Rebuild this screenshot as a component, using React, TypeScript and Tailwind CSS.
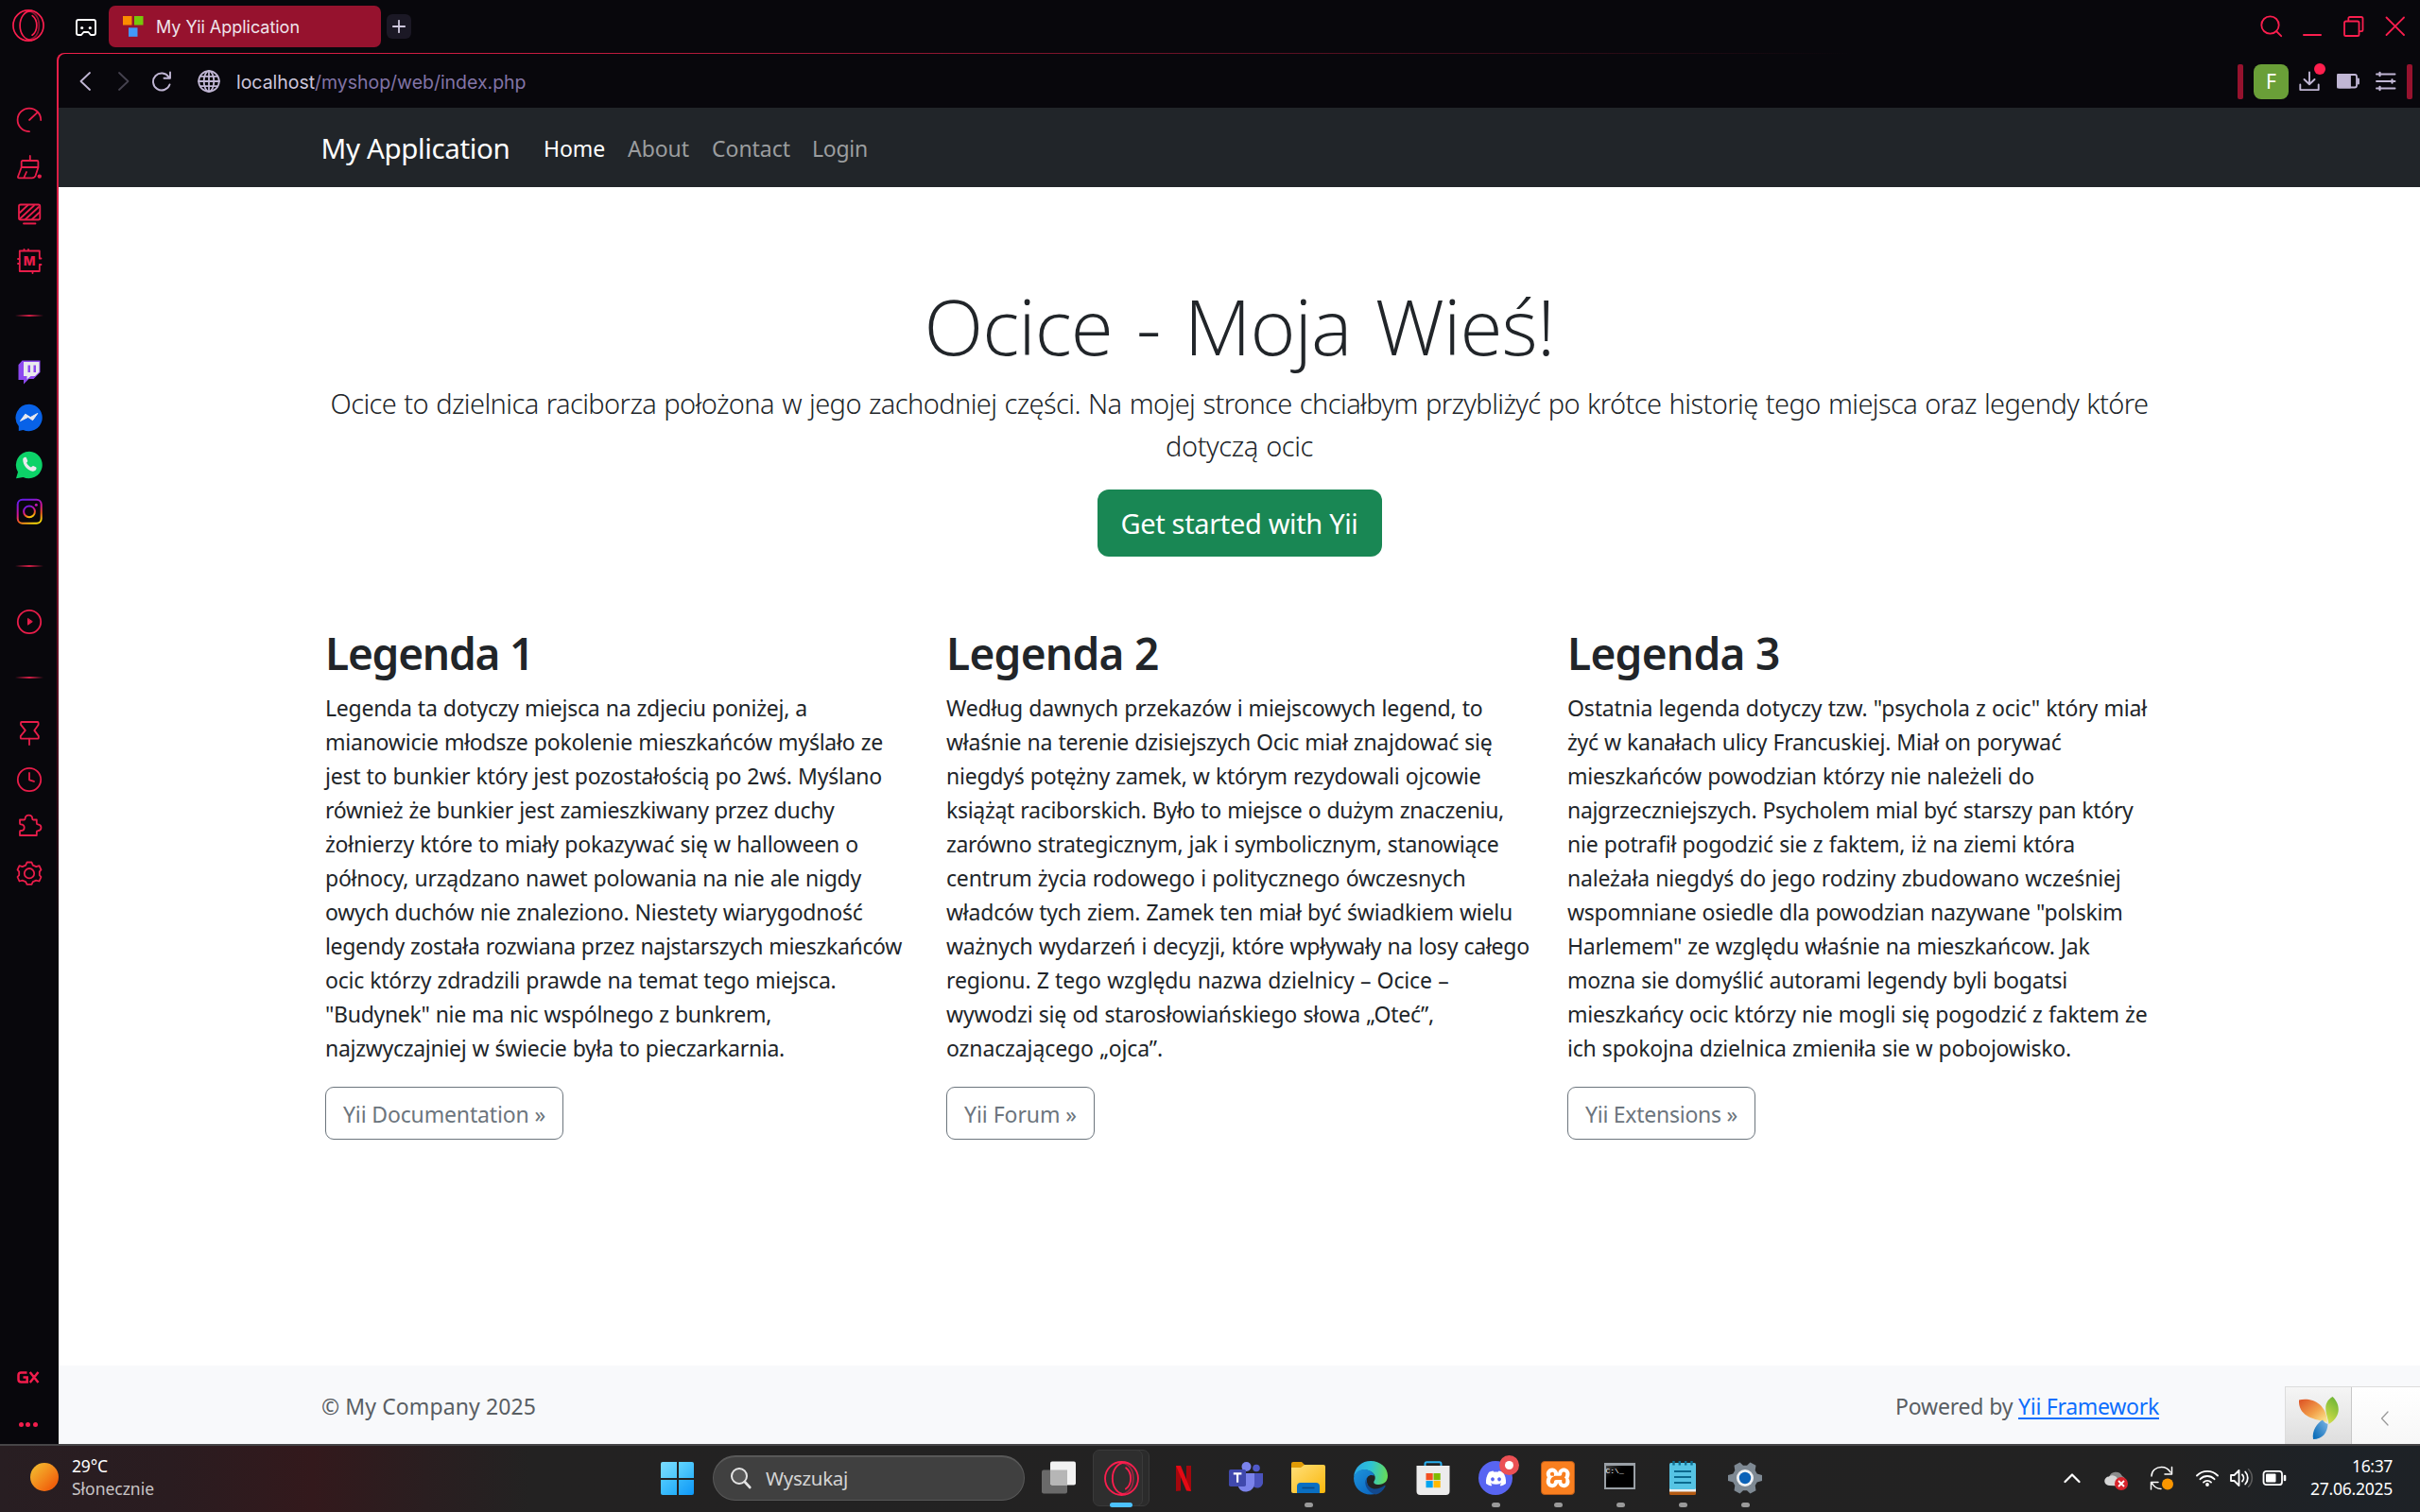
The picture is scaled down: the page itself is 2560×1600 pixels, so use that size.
import React, { useLayoutEffect, useRef, useState } from "react";
import { FaDiscord } from "react-icons/fa";
import { SiXampp } from "react-icons/si";

/* Text set to an exact measure by spreading the difference over its letters. */
function Fit({ w, children, className = "" }: { w: number; children: string; className?: string }) {
  const ref = useRef<HTMLSpanElement>(null);
  const [spacing, setSpacing] = useState(0);
  useLayoutEffect(() => {
    const el = ref.current;
    if (!el) return;
    el.style.letterSpacing = "0px";
    const natural = el.getBoundingClientRect().width;
    setSpacing((w - natural) / children.length);
    el.style.letterSpacing = (w - natural) / children.length + "px";
  }, [w, children]);
  return (
    <span ref={ref} className={"inline-block whitespace-pre " + className} style={{ letterSpacing: spacing + "px" }}>
      {children}
    </span>
  );
}

type Box = { children: React.ReactNode; className?: string; w?: number; h?: number; vb?: string };
function Svg({ children, className = "", w = 28, h = 28, vb }: Box) {
  return (
    <svg
      width={w}
      height={h}
      viewBox={vb ?? `0 0 ${w} ${h}`}
      fill="none"
      stroke="currentColor"
      strokeWidth={1.8}
      strokeLinecap="round"
      strokeLinejoin="round"
      className={"block shrink-0 " + className}
    >
      {children}
    </svg>
  );
}

function OperaLogo({ size }: { size: number }) {
  return (
    <Svg w={size} h={size} vb="0 0 36 36" className="text-[#fa1e4e]">
      <circle cx="18" cy="18" r="17" />
      <path d="M22 1.8C13 1.4 8.6 10 8.6 18S13 34.6 22 34.2" />
      <path d="M16 2.6C20 1 30 4 30 18S20 35 16 33.4" opacity="0.55" />
      <path d="M22.5 7C29 12 29 24 22.3 28.8" />
    </Svg>
  );
}

function TopBar() {
  return (
    <div className="flex h-[56px] items-start">
      <div className="mt-[10px] ml-[13px]">
        <OperaLogo size={34} />
      </div>
      <Svg w={24} h={20} className="mt-[19px] ml-[32px] text-white" vb="0 0 24 20">
        <path d="M4 2h16a2 2 0 0 1 2 2v12a2 2 0 0 1-2 2h-3l-2.5-3h-5L7 18H4a2 2 0 0 1-2-2V4a2 2 0 0 1 2-2Z" strokeWidth="1.9" />
        <circle cx="7.7" cy="10.5" r="1.6" fill="currentColor" stroke="none" />
        <circle cx="16.3" cy="10.5" r="1.6" fill="currentColor" stroke="none" />
      </Svg>
      <div className="mt-[6px] ml-[12px] flex h-[44px] w-[288px] items-center rounded-[7px] bg-[#96122e] pl-[15px]">
        <svg width="22" height="22" viewBox="0 0 22 22" className="block">
          <rect width="9.5" height="9.5" fill="#fb8c00" />
          <rect x="12" width="9.5" height="9.5" fill="#76c80a" />
          <rect x="6" y="12.3" width="9.5" height="9.5" fill="#4398fa" />
        </svg>
        <Fit w={152} className="mt-[2px] ml-[13px] font-['Inter'] text-[18px] leading-[24px] text-[#eee3ea]">
          My Yii Application
        </Fit>
      </div>
      <div className="mt-[15px] ml-[6px] flex h-[26px] w-[26px] items-center justify-center rounded-[6px] bg-[#1b1825]">
        <Svg w={14} h={14} className="text-[#cfc8de]">
          <path d="M7 .8v12.4M.8 7h12.4" />
        </Svg>
      </div>
      <div className="ml-auto flex items-start text-[#fa1e4e]">
        <Svg w={24} h={24} className="mt-[16px] mr-[21px]">
          <circle cx="10.5" cy="10.5" r="9.2" />
          <path d="m17 17 5.2 5.2" />
        </Svg>
        <div className="mt-[35.5px] mr-[22px] h-[2px] w-[20px] rounded bg-[#fa1e4e]" />
        <Svg w={24} h={24} className="mt-[16px] mr-[20px]">
          <rect x="2" y="6.5" width="15.5" height="15.5" rx="1.6" />
          <path d="M6.3 6V3.6c0-1 .6-1.6 1.6-1.6h12c1 0 1.6.6 1.6 1.6v12c0 1-.6 1.6-1.6 1.6h-2" />
        </Svg>
        <Svg w={24} h={24} className="mt-[16px] mr-[14px]">
          <path d="m2.5 2.5 18.500 18.500M21 2.500 2.500 21" />
        </Svg>
      </div>
    </div>
  );
}

function AddressBar() {
  return (
    <div className="flex h-[57px] items-center pt-px text-[#c0b6d4]">
      <Svg w={14} h={20} className="ml-[21px]">
        <path d="M12 1 2.500 10l9.500 9" />
      </Svg>
      <Svg w={14} h={20} className="ml-[27px] text-[#45424f]">
        <path d="m2 1 9.500 9L2 19" />
      </Svg>
      <Svg w={22} h={22} className="ml-[22px]" vb="0 0 22 22">
        <path d="M19.500 14.500A9 9 0 1 1 18.500 6.500M20 1.500v6.200h-6.500" strokeWidth="1.9" />
      </Svg>
      <Svg w={24} h={24} className="ml-[27px]">
        <circle cx="12" cy="12" r="10.800" />
        <ellipse cx="12" cy="12" rx="5.300" ry="10.800" />
        <path d="M12 1v22M1 12h22M3 6.800h18M3 17.200h18" />
      </Svg>
      <div className="mt-px ml-[17px] font-['Inter'] text-[19.500px] leading-[28px]">
        <Fit w={83} className="text-[#cdc6dc]">localhost</Fit>
        <Fit w={223.5} className="text-[#8274a6]">/myshop/web/index.php</Fit>
      </div>
      <div className="ml-auto flex items-center">
        <div className="h-[37px] w-[6px] rounded-[2px] bg-[#96122e]" />
        <div className="ml-[11px] flex h-[37px] w-[37px] items-center justify-center rounded-[8px] bg-[#6a9f38] pt-px font-['Noto_Sans'] text-[21px] leading-none text-white">
          F
        </div>
        <div className="relative ml-[11px]">
          <Svg w={22} h={22}>
            <path d="M11 1.500v12.500M5.500 9l5.500 5.300L16.500 9M1.300 14.500v5.600h19.400v-5.600" strokeWidth="1.900" />
          </Svg>
          <div className="absolute -top-[8px] left-[16px] h-[12px] w-[12px] rounded-full bg-[#ff1f4e]" />
        </div>
        <Svg w={24} h={16} className="ml-[18px]">
          <rect x="1" y="1" width="20" height="13.500" rx="2" />
          <path d="M1 1h13v13.500H1z" fill="currentColor" />
          <path d="M22.800 5.500v5" strokeWidth="2.200" />
        </Svg>
        <Svg w={22} h={22} className="ml-[17px]">
          <path d="M1 3.500h19.500M1 11h19.500M1 18.500h19.500" strokeWidth="1.900" />
          <path d="M4.500 1.800v3.400M17.500 9.300v3.400M4.500 16.800v3.400" strokeWidth="2.200" />
        </Svg>
        <div className="mr-[8px] ml-[11px] h-[37px] w-[6px] rounded-[2px] bg-[#96122e]" />
      </div>
    </div>
  );
}

function Divider({ className }: { className: string }) {
  return <div className={"h-[2px] w-[30px] bg-linear-to-r from-transparent via-[#d41e46] to-transparent " + className} />;
}

function Sidebar() {
  return (
    <aside className="flex w-[60px] shrink-0 flex-col items-center pl-[2px] text-[#e81d4a]">
      <Svg className="mt-[57px]">
        <path d="M14 26.200A12.300 12.300 0 1 1 26.200 14M14 14l9-8.300" />
      </Svg>
      <Svg className="mt-[22px]">
        <path d="M14.800 2v5M7 7h15.200a1.200 1.200 0 0 1 1.200 1.200V14H5.700V8.200A1.200 1.200 0 0 1 7 7ZM5.700 14 2 24c-.2.800.2 1.300 1 1.300h13.800c2 0 3-.7 3.700-2.300l3-9M8.500 24.500l2.500-5.500" />
        <circle cx="24.800" cy="23.600" r="2.200" fill="currentColor" stroke="none" />
      </Svg>
      <Svg className="mt-[22px]">
        <rect x="3" y="3.500" width="22.300" height="16" rx="1.800" />
        <path d="M4 12 12.500 4M4 18.500 19 4.500M10 19 24 6M17 19l8-7.500M8 23.500h12.500" />
      </Svg>
      <Svg className="mt-[21px]">
        <path d="M24.800 11V3.500h-21v21.500h21V19M24.800 11.500H26.500M24.800 18h1.700M2 12h2M2 17h2M8.500 1.800v1.700M13 1.800v1.700M17.500 25v2" />
        <text x="14" y="19" textAnchor="middle" fontSize="13.500" fontWeight="800" fill="currentColor" stroke="none" fontFamily="Inter">
          M
        </text>
      </Svg>
      <Divider className="mt-[43px]" />
      <svg width="28" height="28" viewBox="0 0 28 28" className="mt-[45px] block shrink-0">
        <path d="M6.500 1.500h19V14l-7 7h-5l-5.500 5.500V22H2.500V6z" fill="#8d48f0" />
        <path d="M8 3h16.500v10.500L20 18h-4.500L11.500 21.500V18H8z" fill="#e9e9ee" />
        <path d="M12.500 6.500h2.500v7.500h-2.500zM18.500 6.500h2.500v7.500h-2.500z" fill="#8d48f0" />
      </svg>
      <svg width="30" height="30" viewBox="0 0 30 30" className="mt-[19px] block shrink-0">
        <path d="M15 .7A14.300 14.300 0 1 1 8.500 28L3.800 29V24A14.300 14.300 0 0 1 15 .7Z" fill="#0862e8" />
        <path d="m5.500 18.500 5.300-7.300 5.400 3.400 7.600-4.200-5.200 7.300-4.900-3.300z" fill="#e9e9ee" stroke="#e9e9ee" strokeLinejoin="round" />
      </svg>
      <svg width="30" height="30" viewBox="0 0 30 30" className="mt-[20px] block shrink-0">
        <path d="M15 .7A14.300 14.300 0 1 1 8.500 28L1 29.200l2-6.800A14.300 14.300 0 0 1 15 .7Z" fill="#0cd268" />
        <path d="M8.200 9.300c0-1.500 1.300-2.500 2.500-2.500 1 0 1.300.5 1.700 1.600l.8 2c.3.900-.8 1.600-1.100 2.300 1 2.200 2.800 3.800 4.900 4.700.8-.3 1.300-1.600 2.200-1.400l2.700 1.300c.8.500.8 1.300.4 2.300-.6 1.500-2 2.200-3.700 2.100-5.600-.6-10.300-6.400-10.400-12.400Z" fill="#e9e9ee" />
      </svg>
      <svg width="28" height="28" viewBox="0 0 28 28" fill="none" className="mt-[20px] block shrink-0">
        <defs>
          <linearGradient id="insta" x1="0.300" y1="0" x2="0.700" y2="1">
            <stop offset="0" stopColor="#6a1be8" />
            <stop offset="0.450" stopColor="#d4149a" />
            <stop offset="0.720" stopColor="#f05a20" />
            <stop offset="1" stopColor="#f4d40a" />
          </linearGradient>
        </defs>
        <rect x="1.700" y="1.700" width="25" height="25" rx="5" stroke="url(#insta)" strokeWidth="2" />
        <circle cx="14" cy="14.300" r="5.900" stroke="url(#insta)" strokeWidth="2" />
        <circle cx="21.300" cy="7.300" r="1.500" fill="#c218b0" />
      </svg>
      <Divider className="mt-[43px]" />
      <Svg className="mt-[44px]">
        <circle cx="14" cy="14" r="12.200" />
        <path d="M12.500 10.800v6.400l4.500-3.200z" fill="currentColor" strokeWidth="1" />
      </Svg>
      <Divider className="mt-[44px]" />
      <Svg className="mt-[43px]">
        <path d="M14 20.500V27M5.800 3h17c.5 0 .8.400.8.900v2l-4.300 6 4.500 6v2c0 .500-.3.800-.8.800H5.600c-.500 0-.8-.3-.8-.8v-2l5-6-4.800-6V3.900c0-.5.300-.9.800-.9Z" />
      </Svg>
      <Svg className="mt-[22px]">
        <circle cx="14" cy="14" r="12.200" />
        <path d="M14 7v7.300l5 1.600" />
      </Svg>
      <Svg className="mt-[20px]">
        <path d="M4 8.500h4.600c.8 0 1-.5 1-1.200 0-2.300 1.500-3.700 3.800-3.700s3.800 1.400 3.800 3.700c0 .7.300 1.200 1 1.200h3.600v3.800c0 .7.500 1 1.200 1 2.100.2 3.500 1.400 3.500 3.400s-1.400 3.300-3.500 3.500c-.8 0-1.200.3-1.200 1V25H4v-4c0-.7.400-1 1-1 2 0 3.700-1.200 3.700-3.300S7 13.400 5 13.300c-.6 0-1-.4-1-1z" />
      </Svg>
      <Svg className="mt-[23px]">
        <path d="M11.500 2.500h5l1.300 3.200 3.500 1.400 3.200-1 2 4.300-1.700 2v3.800l1.700 1.800-2 4.500-3.300-.9-3.400 1.500-1.300 2.700h-5l-1.300-2.700-3.500-1.500-3.200.9-2-4.500 1.700-1.800v-3.800l-1.700-2 2-4.300 3.200 1 3.500-1.400z" />
        <circle cx="14" cy="14.200" r="5.200" />
      </Svg>
      <Svg w={24} h={13} vb="0 0 24 13" className="mt-auto mr-[3px] text-[#f21d4c]">
        <path d="M10.500 1.500H4.200Q1.500 1.500 1.500 4.200v4.600q0 2.700 2.700 2.700h6.500V6.500H6.500M13.700 1l8.800 11M22.500 1l-8.800 11" strokeWidth="2.500" strokeLinecap="butt" strokeLinejoin="miter" />
      </Svg>
      <div className="mt-[41px] mr-[3px] mb-[18px] flex gap-[2.500px]">
        <i className="h-[5px] w-[5px] rounded-full bg-[#f21d4c]" />
        <i className="h-[5px] w-[5px] rounded-full bg-[#f21d4c]" />
        <i className="h-[5px] w-[5px] rounded-full bg-[#f21d4c]" />
      </div>
    </aside>
  );
}

type Legend = { title: string; titleWidth: number; lines: [string, number][]; button: string; buttonText: number };

const legends: Legend[] = [
  {
    title: "Legenda 1",
    titleWidth: 220,
    lines: [
      ["Legenda ta dotyczy miejsca na zdjeciu poniżej, a", 510],
      ["mianowicie młodsze pokolenie mieszkańców myślało ze", 590],
      ["jest to bunkier który jest pozostałością po 2wś. Myślano", 589],
      ["również że bunkier jest zamieszkiwany przez duchy", 538.5],
      ["żołnierzy które to miały pokazywać się w halloween o", 564],
      ["północy, urządzano nawet polowania na nie ale nigdy", 567],
      ["owych duchów nie znaleziono. Niestety wiarygodność", 568.5],
      ["legendy została rozwiana przez najstarszych mieszkańców", 610],
      ["ocic którzy zdradzili prawde na temat tego miejsca.", 540.5],
      ["\"Budynek\" nie ma nic wspólnego z bunkrem,", 472],
      ["najzwyczajniej w świecie była to pieczarkarnia.", 486],
    ],
    button: "Yii Documentation »",
    buttonText: 214,
  },
  {
    title: "Legenda 2",
    titleWidth: 224.5,
    lines: [
      ["Według dawnych przekazów i miejscowych legend, to", 567.5],
      ["właśnie na terenie dzisiejszych Ocic miał znajdować się", 577.5],
      ["niegdyś potężny zamek, w którym rezydowali ojcowie", 565.5],
      ["książąt raciborskich. Było to miejsce o dużym znaczeniu,", 590],
      ["zarówno strategicznym, jak i symbolicznym, stanowiące", 584.5],
      ["centrum życia rodowego i politycznego ówczesnych", 549.5],
      ["władców tych ziem. Zamek ten miał być świadkiem wielu", 599],
      ["ważnych wydarzeń i decyzji, które wpływały na losy całego", 617],
      ["regionu. Z tego względu nazwa dzielnicy – Ocice –", 531.5],
      ["wywodzi się od starosłowiańskiego słowa „Oteć”,", 516],
      ["oznaczającego „ojca”.", 229],
    ],
    button: "Yii Forum »",
    buttonText: 119,
  },
  {
    title: "Legenda 3",
    titleWidth: 224.5,
    lines: [
      ["Ostatnia legenda dotyczy tzw. \"psychola z ocic\" który miał", 613],
      ["żyć w kanałach ulicy Francuskiej. Miał on porywać", 522.5],
      ["mieszkańców powodzian którzy nie należeli do", 494],
      ["najgrzeczniejszych. Psycholem mial być starszy pan który", 598.5],
      ["nie potrafił pogodzić sie z faktem, iż na ziemi która", 537],
      ["należała niegdyś do jego rodziny zbudowano wcześniej", 585.5],
      ["wspomniane osiedle dla powodzian nazywane \"polskim", 587.5],
      ["Harlemem\" ze względu właśnie na mieszkańcow. Jak", 552.5],
      ["mozna sie domyślić autorami legendy byli bogatsi", 529],
      ["mieszkańcy ocic którzy nie mogli się pogodzić z faktem że", 613.5],
      ["ich spokojna dzielnica zmieniła sie w pobojowisko.", 533],
    ],
    button: "Yii Extensions »",
    buttonText: 161,
  },
];

function LegendColumn({ item }: { item: Legend }) {
  return (
    <div className="flex flex-col items-start">
      <h2 className="text-[46px] leading-[58px] font-[560]">
        <Fit w={item.titleWidth}>{item.title}</Fit>
      </h2>
      <p className="mt-[11px] text-[23px] leading-[36px] font-[370] [word-spacing:0.5px]">
        {item.lines.map(([text, w]) => (
          <Fit key={text} w={w} className="!block w-fit">
            {text}
          </Fit>
        ))}
      </p>
      <a className="mt-[23px] flex h-[56px] items-center rounded-[9px] border border-[#6c757d] px-[18px] pt-[2px] text-[23px] leading-[36px] font-[370] text-[#6c757d]">
        <Fit w={item.buttonText}>{item.button}</Fit>
      </a>
    </div>
  );
}

function YiiLogo() {
  return (
    <svg width="42" height="45" viewBox="0 0 42 45" className="block">
      <defs>
        <linearGradient id="yo" x1="0" y1="0" x2="1" y2="1">
          <stop offset="0" stopColor="#dc4f23" />
          <stop offset="0.550" stopColor="#f2a04a" />
          <stop offset="1" stopColor="#fdf09a" />
        </linearGradient>
        <linearGradient id="yg" x1="0.600" y1="0" x2="0.200" y2="1">
          <stop offset="0" stopColor="#6fb536" />
          <stop offset="1" stopColor="#d8e04a" />
        </linearGradient>
        <linearGradient id="yb" x1="1" y1="0" x2="0" y2="0.800">
          <stop offset="0" stopColor="#7fb6e4" />
          <stop offset="1" stopColor="#0a6cb8" />
        </linearGradient>
      </defs>
      <path d="M0 3.500C12 .5 29 6 30 27C16 24-1 21 0 3.500Z" fill="url(#yo)" />
      <path d="M35.500 0C43 7 46 20 31.500 29C31.500 22 22 8 35.500 0Z" fill="url(#yg)" transform="translate(0 0)" />
      <path d="M25 24.500C27 28 29.500 28.500 30.500 29C30 38 25 45 15 45C13.500 36 19 28 25 24.500Z" fill="url(#yb)" />
    </svg>
  );
}

function WebPage() {
  return (
    <div className="relative flex flex-1 flex-col bg-white font-['Noto_Sans',sans-serif] text-[#212529]">
      <nav className="flex h-[84px] items-center bg-[#212529] pt-[2px] pl-[277.500px] text-[23px] leading-[36px]">
        <Fit w={200} className="text-[29.500px] font-[370] text-white">My Application</Fit>
        <Fit w={65} className="ml-[35.500px] font-[370] text-white">Home</Fit>
        <Fit w={65} className="ml-[24px] font-[370] text-[#9b9d9f]">About</Fit>
        <Fit w={83} className="ml-[24px] font-[370] text-[#9b9d9f]">Contact</Fit>
        <Fit w={59} className="ml-[23px] font-[370] text-[#9b9d9f]">Login</Fit>
      </nav>
      <header className="flex flex-col items-center pt-[96px]">
        <h1 className="h-[100px] font-['Open_Sans'] text-[82px] leading-[100px] font-light [word-spacing:5px]">
          <Fit w={667}>Ocice - Moja Wieś!</Fit>
        </h1>
        <p className="mt-[10px] flex flex-col items-center text-[29px] leading-[45px] font-light [word-spacing:1.200px]">
          <Fit w={1923}>
            Ocice to dzielnica raciborza położona w jego zachodniej części. Na mojej stronce chciałbym przybliżyć po krótce historię tego miejsca oraz legendy które
          </Fit>
          <Fit w={156}>dotyczą ocic</Fit>
        </p>
        <a className="mt-[24px] flex h-[71px] w-[301px] items-center justify-center rounded-[12px] bg-[#198754] text-[29px] leading-[45px] font-[370] text-white">
          <Fit w={251}>Get started with Yii</Fit>
        </a>
      </header>
      <section className="mt-[73px] ml-[282px] grid w-[1935px] grid-cols-3 gap-[36px]">
        {legends.map((item) => (
          <LegendColumn key={item.title} item={item} />
        ))}
      </section>
      <footer className="mt-auto flex h-[83px] justify-between bg-[#f8f9fb] px-[276px] pt-[25px] pl-[278px] text-[23px] leading-[36px] font-[370] text-[#595e63]">
        <Fit w={227}>© My Company 2025</Fit>
        <div>
          <Fit w={130}>Powered by </Fit>
          <Fit w={149} className="text-[#0d6efd] underline decoration-2 underline-offset-[3px]">Yii Framework</Fit>
        </div>
      </footer>
      <div className="absolute right-0 bottom-0 flex h-[61px] w-[143px] border-t border-l border-[#dcdcdc] bg-linear-to-b from-white to-[#f7f7f7]">
        <div className="flex w-[70px] items-start justify-center border-r border-[#c8c8c8] bg-linear-to-b from-[#f5f5f5] to-[#dedede] pt-[10px]">
          <YiiLogo />
        </div>
        <Svg w={10} h={16} className="mt-[25px] ml-[30px] text-[#9a9a9a]">
          <path d="M8 1 1.500 8 8 15" strokeWidth="1.300" />
        </Svg>
      </div>
    </div>
  );
}

function Slot({ children, running = false }: { children: React.ReactNode; running?: boolean }) {
  return (
    <div className="relative flex h-[70px] w-[66px] items-center justify-center pb-[2px]">
      {children}
      {running && <div className="absolute bottom-[5px] left-[28.500px] h-[5px] w-[9px] rounded-full bg-[#9a9a9a]" />}
    </div>
  );
}

function Taskbar() {
  return (
    <div className="flex h-[72px] border-t-2 border-[#464547] bg-[linear-gradient(90deg,#281e22_0px,#2a1c20_180px,#33191c_330px,#2a1e20_450px,#232222_560px,#222222_2300px,#1d2227_2480px,#1e2226_2560px)] font-['Noto_Sans',sans-serif]">
      <div className="flex w-[699px] shrink-0 pl-[32px]">
        <div className="mt-[18px] h-[30px] w-[30px] rounded-full bg-linear-to-br from-[#f0c332] to-[#f0620c] to-80%" />
        <div className="mt-[9px] ml-[14px] flex flex-col items-start text-[17.500px] leading-[24px]">
          <Fit w={38} className="text-white">29°C</Fit>
          <Fit w={87} className="text-[#c8c4c5]">Słonecznie</Fit>
        </div>
      </div>
      <div className="mt-[17px] grid h-[35px] w-[35px] grid-cols-2 gap-[2px]">
        <i className="rounded-tl-[2px] bg-linear-to-br from-[#7adcff] to-[#4cc8fa]" />
        <i className="rounded-tr-[2px] bg-linear-to-br from-[#60d4ff] to-[#2fb4f8]" />
        <i className="rounded-bl-[2px] bg-linear-to-br from-[#4cc8ff] to-[#22aef8]" />
        <i className="rounded-br-[2px] bg-linear-to-br from-[#32b6fb] to-[#0c98f8]" />
      </div>
      <div className="mt-[10px] ml-[20px] flex h-[48px] w-[330px] items-center rounded-full border border-t-2 border-[#585858] bg-[#404040] pb-px pl-[17px] text-[20.500px] leading-[28px] text-[#d4d4d4]">
        <Svg w={24} h={24} className="text-[#e4e4e4]">
          <circle cx="10" cy="10" r="8" strokeWidth="2" fill="#585858" />
          <path d="m15.800 16 5.500 6" strokeWidth="2.600" />
        </Svg>
        <Fit w={87} className="ml-[14px]">Wyszukaj</Fit>
      </div>
      <div className="ml-[3px] flex">
        <Slot>
          <svg width="36" height="36" viewBox="0 0 36 36" className="block">
            <rect x="0" y="9.500" width="27" height="25" rx="2" fill="#6a6a6a" />
            <rect x="9" y="0.500" width="27" height="25" rx="2" fill="#f2f2f2" />
            <path d="M9 9.500h18v16H11a2 2 0 0 1-2-2z" fill="#b6b6b6" />
          </svg>
        </Slot>
        <div className="relative flex h-[70px] w-[66px] items-center justify-center pb-[2px]">
          <div className="absolute top-[4px] right-[3.500px] h-[60px] w-[20px] rounded-[7px] border border-[#3a3a3a] bg-[#2b2b2b]" />
          <div className="absolute top-[4px] left-[3px] h-[60px] w-[53px] rounded-[7px] border border-[#3a3a3a] bg-[#2e2e2e]" />
          <div className="relative">
            <OperaLogo size={37} />
          </div>
          <div className="absolute bottom-[5px] left-[21px] h-[5px] w-[24px] rounded-full bg-[#4cc2ff]" />
        </div>
        <Slot>
          <svg width="16" height="27" viewBox="0 0 16 27" className="block">
            <path d="M0 0h5v26.500L0 27zM11 0h5v27l-5-.5z" fill="#a4070d" />
            <path d="M0 0h5l11 27-5-.7z" fill="#e50914" />
          </svg>
        </Slot>
        <Slot>
          <svg width="36" height="34" viewBox="0 0 36 34" className="block">
            <circle cx="29" cy="6.500" r="3.800" fill="#5059c9" />
            <path d="M24 12h12v8.500a6 6 0 0 1-12 2z" fill="#4b53bc" />
            <circle cx="18.500" cy="5" r="5" fill="#7b83eb" />
            <path d="M10 12h17v11a9 9 0 0 1-17 3.500z" fill="#7b83eb" />
            <rect x="0" y="8" width="18" height="18" rx="1.800" fill="#4049ad" />
            <path d="M4.800 12.300h8.600M9.100 12.300v9.500" stroke="#fff" strokeWidth="2.200" />
          </svg>
        </Slot>
        <Slot running>
          <svg width="36" height="34" viewBox="0 0 36 34" className="block">
            <defs>
              <linearGradient id="fold" x1="0" y1="0" x2="1" y2="1">
                <stop offset="0" stopColor="#ffe07a" />
                <stop offset="1" stopColor="#fab70c" />
              </linearGradient>
            </defs>
            <path d="M0 2a2 2 0 0 1 2-2h9l4 4v8H0z" fill="#e09b06" />
            <path d="M0 6h10l4-3h20a2 2 0 0 1 2 2v26a2 2 0 0 1-2 2H2a2 2 0 0 1-2-2z" fill="url(#fold)" />
            <path d="M6 33V26a4 4 0 0 1 4-4h16a4 4 0 0 1 4 4v7z" fill="#0a6fc2" />
            <path d="M11.500 27.500h13" stroke="#0b4a86" strokeWidth="1.600" />
          </svg>
        </Slot>
        <Slot>
          <svg width="36" height="36" viewBox="0 0 36 36" className="block">
            <defs>
              <linearGradient id="e1" x1="0" y1="0.300" x2="1" y2="0.400">
                <stop offset="0" stopColor="#2aa6e6" />
                <stop offset="0.500" stopColor="#2ec4d4" />
                <stop offset="1" stopColor="#66dc58" />
              </linearGradient>
              <linearGradient id="e2" x1="0" y1="0" x2="0.800" y2="1">
                <stop offset="0" stopColor="#1c94dc" />
                <stop offset="1" stopColor="#0c66c0" />
              </linearGradient>
            </defs>
            <path d="M0 17C1 6 9 0 18 0c10 0 18 7 18 15.500 0 6-4 9.500-9.500 9.500-4 0-6-1.600-5-3.500 3-4 .5-9.500-6-11.500C8 8.500 3 11 0 17Z" fill="url(#e1)" />
            <path d="M0 18C1 12.500 5 9 11 9c5 0 9.500 2.500 11 6.500-6-2-9 1.500-8 7 1 6 5.500 11 11 11.700C13 39 0 31 0 18Z" fill="url(#e2)" />
            <path d="M15 16.500c-2.500 3.500-1.500 8 2 11 4 3.200 10 2.500 15.500-1.500.8-.5 1.400.3.900 1.200C31 31.500 27.500 34.500 23.500 35.500 15 34 8.500 23 15 16.500Z" fill="#12498e" />
          </svg>
        </Slot>
        <Slot>
          <svg width="36" height="36" viewBox="0 0 36 36" className="block">
            <path d="M9.500 7V3q0-1.800 1.800-1.800h13.400q1.800 0 1.800 1.800v4" stroke="#2ab0f0" strokeWidth="2" fill="none" />
            <path d="M.5 5h35v27a4 4 0 0 1-4 4h-27a4 4 0 0 1-4-4z" fill="#ececec" />
            <path d="M10.500 13h7.200v7.200h-7.200z" fill="#f25022" />
            <path d="M18.500 13h7.200v7.200h-7.200z" fill="#7fba00" />
            <path d="M10.500 21h7.200v7.200h-7.200z" fill="#00a4ef" />
            <path d="M18.500 21h7.200v7.200h-7.200z" fill="#ffb900" />
          </svg>
        </Slot>
        <Slot running>
          <div className="relative flex h-[36px] w-[36px] items-center justify-center rounded-full bg-[#5865f2]">
            <FaDiscord size={23} color="#fff" />
            <div className="absolute -top-[6px] left-[22px] flex h-[21px] w-[21px] items-center justify-center rounded-full bg-[#eb5054]">
              <div className="h-[9px] w-[9px] rounded-full bg-white" />
            </div>
          </div>
        </Slot>
        <Slot running>
          <div className="flex h-[36px] w-[36px] items-center justify-center rounded-[4px] border border-[#b85a18] bg-[#f97f1f]">
            <div className="flex h-[28px] w-[28px] items-center justify-center overflow-hidden bg-white">
              <SiXampp size={34} color="#f97f1f" className="shrink-0" />
            </div>
          </div>
        </Slot>
        <Slot running>
          <div className="mr-[2px] mb-[5px] h-[28px] w-[33px] border-2 border-t-[3px] border-[#9aa0a6] bg-linear-to-br from-[#4a4a4a] via-black via-45% to-black font-['Liberation_Mono'] text-[8px] leading-[11px] text-white">
            C:\_
          </div>
        </Slot>
        <Slot running>
          <svg width="28" height="36" viewBox="0 0 28 36" className="block">
            <rect x="0" y="28" width="28" height="8" rx="1.500" fill="#b35a12" />
            <rect x="0" y="26" width="28" height="6.500" fill="#eeeeee" />
            <rect x="0" y="2" width="28" height="28" rx="1.500" fill="#56c4e4" />
            <path d="M4.500 0v4.500M10.800 0v4.500M17.200 0v4.500M23.500 0v4.500" stroke="#0f6f92" strokeWidth="2.400" />
            <path d="M5 11h18M5 17h18M5 23h18" stroke="#0b6a8e" strokeWidth="2" />
          </svg>
        </Slot>
        <Slot running>
          <svg width="36" height="36" viewBox="0 0 36 36" className="block">
            <path
              d="M12.500 1.500 16 4.800h4l3.500-3.300 6 3.200-.8 5.300 2 3.500 5.300 1.500v6l-5.300 1.500-2 3.500.8 5.300-6 3.200L20 31.200h-4l-3.500 3.300-6-3.200.8-5.300-2-3.500L0 21v-6l5.300-1.500 2-3.500-.8-5.300z"
              fill="#7e8993"
            />
            <circle cx="18" cy="18" r="9" fill="#f0f2f4" />
            <circle cx="18" cy="18" r="6.200" fill="#0b62b8" />
          </svg>
        </Slot>
      </div>
      <div className="ml-auto flex text-white">
        <Svg w={18} h={12} className="mt-[28px]">
          <path d="m1.500 10 7.500-7.500 7.500 7.500" strokeWidth="2.200" />
        </Svg>
        <svg width="26" height="22" viewBox="0 0 26 22" className="mt-[25px] ml-[25px] block">
          <path d="M5 8a7.500 7.500 0 0 1 14-1 6 6 0 0 1 3 8H10z" fill="#8c8c8c" />
          <path d="M5 17a4.700 4.700 0 0 1 0-9.500 6 6 0 0 1 9 2l3 8z" fill="#d6d6d6" />
          <circle cx="18" cy="15" r="7" fill="#d8242c" />
          <path d="m15 12 6 6M21 12l-6 6" stroke="#fff" strokeWidth="1.800" />
        </svg>
        <Svg w={26} h={26} className="mt-[21px] ml-[22px]">
          <path d="M2 11C2 5 7 1.500 12.500 1.500c4 0 7.500 2 9.500 5.500M23.500 1.500v7.500h-7.500M12 24.500C8 24.500 4.500 22 2.500 18.500M1.500 25v-7.500H9" strokeWidth="1.500" />
          <circle cx="19" cy="19.500" r="6" fill="#fb9600" stroke="none" />
        </Svg>
        <Svg w={26} h={20} className="mt-[24px] ml-[22px]">
          <path d="M2 7.500a15.500 15.500 0 0 1 22 0M5.500 11.200a10.500 10.500 0 0 1 15 0M9 14.600a5.600 5.600 0 0 1 8 0" strokeWidth="1.900" />
          <circle cx="13" cy="17" r="1.900" fill="currentColor" stroke="none" />
        </Svg>
        <Svg w={26} h={22} className="mt-[23px] ml-[10px]">
          <path d="M2 8h3.500l5-5v16l-5-5H2zM14 7.500a5 5 0 0 1 0 7M17.200 4.500a9.500 9.500 0 0 1 0 13" strokeWidth="1.800" />
          <path d="M20.500 1.800a13 13 0 0 1 0 18.400" strokeWidth="1.600" stroke="#5a5a5a" />
        </Svg>
        <Svg w={26} h={18} className="mt-[25px] ml-[9px]">
          <rect x="1.500" y="1.800" width="19.500" height="14.400" rx="3" strokeWidth="1.800" />
          <rect x="4" y="4.500" width="10.500" height="9" rx="1" fill="currentColor" stroke="none" />
          <path d="M24 7v4" strokeWidth="2.600" />
        </Svg>
        <div className="mt-[9px] mr-[29px] ml-[25px] flex flex-col items-end text-[17.500px] leading-[24px]">
          <Fit w={43}>16:37</Fit>
          <Fit w={87}>27.06.2025</Fit>
        </div>
      </div>
    </div>
  );
}

export default function App() {
  return (
    <div className="flex h-[1600px] w-[2560px] flex-col overflow-hidden bg-[#08070c]">
      <TopBar />
      <div className="flex min-h-0 flex-1">
        <Sidebar />
        <div className="flex flex-1 rounded-tl-[8px] bg-[radial-gradient(ellipse_1900px_950px_at_0px_0px,#ee1f4a_0%,#c01b3e_30%,#08070c_100%)] pt-px pl-[2px]">
          <div className="flex flex-1 flex-col overflow-hidden rounded-tl-[7px] bg-[#08070c]">
            <AddressBar />
            <WebPage />
          </div>
        </div>
      </div>
      <Taskbar />
    </div>
  );
}
